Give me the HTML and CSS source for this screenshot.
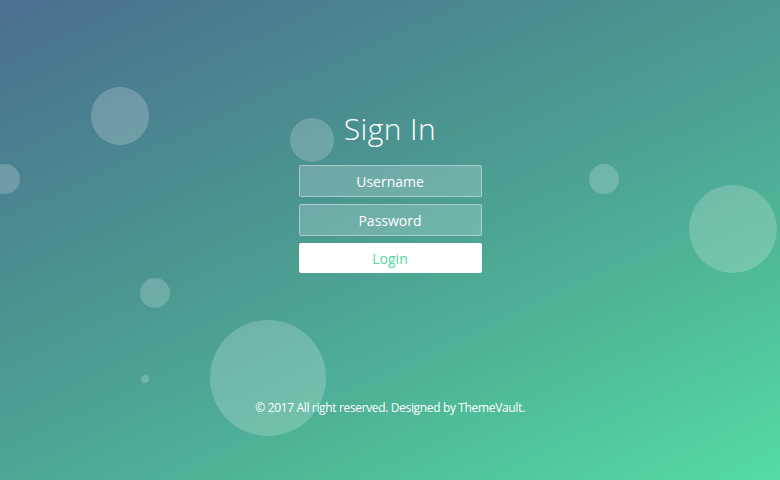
FILE: index.html
```html
<!DOCTYPE html>
<html>
<head>
<meta charset="utf-8">
<link rel="stylesheet" href="styles.css">
</head>
<body>
<div class="page">
  <ul class="bubbles">
    <li class="b b1"></li>
    <li class="b b2"></li>
    <li class="b b3"></li>
    <li class="b b4"></li>
    <li class="b b5"></li>
    <li class="b b6"></li>
    <li class="b b7"></li>
    <li class="b b8"></li>
  </ul>
  <main class="content">
    <h1 class="title">Sign In</h1>
    <form class="form">
      <input class="field" type="text" placeholder="Username">
      <input class="field" type="password" placeholder="Password">
      <button class="login" type="button">Login</button>
    </form>
  </main>
  <footer class="footer">© 2017 All right reserved. Designed by ThemeVault.</footer>
</div>
</body>
</html>
```
FILE: styles.css
```css
* { box-sizing: border-box; }
html, body { margin: 0; padding: 0; }
body {
  width: 780px;
  height: 480px;
  overflow: hidden;
  font-family: "Open Sans", "Lato", sans-serif;
}
.page {
  position: relative;
  width: 780px;
  height: 480px;
  background: linear-gradient(155deg, #4b6e8f 0%, #4b9590 40%, #4fb597 70%, #54dca3 100%);
  display: flex;
  flex-direction: column;
  align-items: center;
  overflow: hidden;
}
.bubbles { list-style: none; margin: 0; padding: 0; }
.b {
  position: absolute;
  border-radius: 50%;
  background: rgba(255, 255, 255, 0.2);
}
.b1 { left: 91px; top: 87px; width: 58px; height: 58px; }
.b2 { left: 290px; top: 118px; width: 44px; height: 44px; }
.b3 { left: -10px; top: 164px; width: 30px; height: 30px; }
.b4 { left: 589px; top: 164px; width: 30px; height: 30px; }
.b5 { left: 689px; top: 185px; width: 88px; height: 88px; }
.b6 { left: 140px; top: 278px; width: 30px; height: 30px; }
.b7 { left: 141px; top: 375px; width: 8px; height: 8px; }
.b8 { left: 210px; top: 320px; width: 116px; height: 116px; }
.content {
  position: relative;
  display: flex;
  flex-direction: column;
  align-items: center;
  margin-top: 109px;
}
.title {
  margin: 0;
  font-weight: 300;
  font-size: 30px;
  line-height: 40px;
  color: #ffffff;
  letter-spacing: 0.4px;
}
.form {
  margin-top: 16px;
  width: 183px;
  display: flex;
  flex-direction: column;
  gap: 7px;
}
.field {
  width: 183px;
  height: 32px;
  margin: 0;
  padding: 0;
  border: 1px solid rgba(255, 255, 255, 0.4);
  background: rgba(255, 255, 255, 0.2);
  border-radius: 2px;
  text-align: center;
  font-family: inherit;
  font-size: 14px;
  color: #fff;
  outline: none;
}
.field::placeholder { color: #ffffff; opacity: 1; }
.login {
  width: 183px;
  height: 30px;
  margin: 0;
  border: none;
  border-radius: 2px;
  background: #ffffff;
  color: #53d8a1;
  font-family: inherit;
  font-size: 14px;
  padding: 0;
}
.footer {
  position: relative;
  margin-top: 126px;
  font-size: 12px;
  color: #ffffff;
  letter-spacing: -0.35px;
}
```
